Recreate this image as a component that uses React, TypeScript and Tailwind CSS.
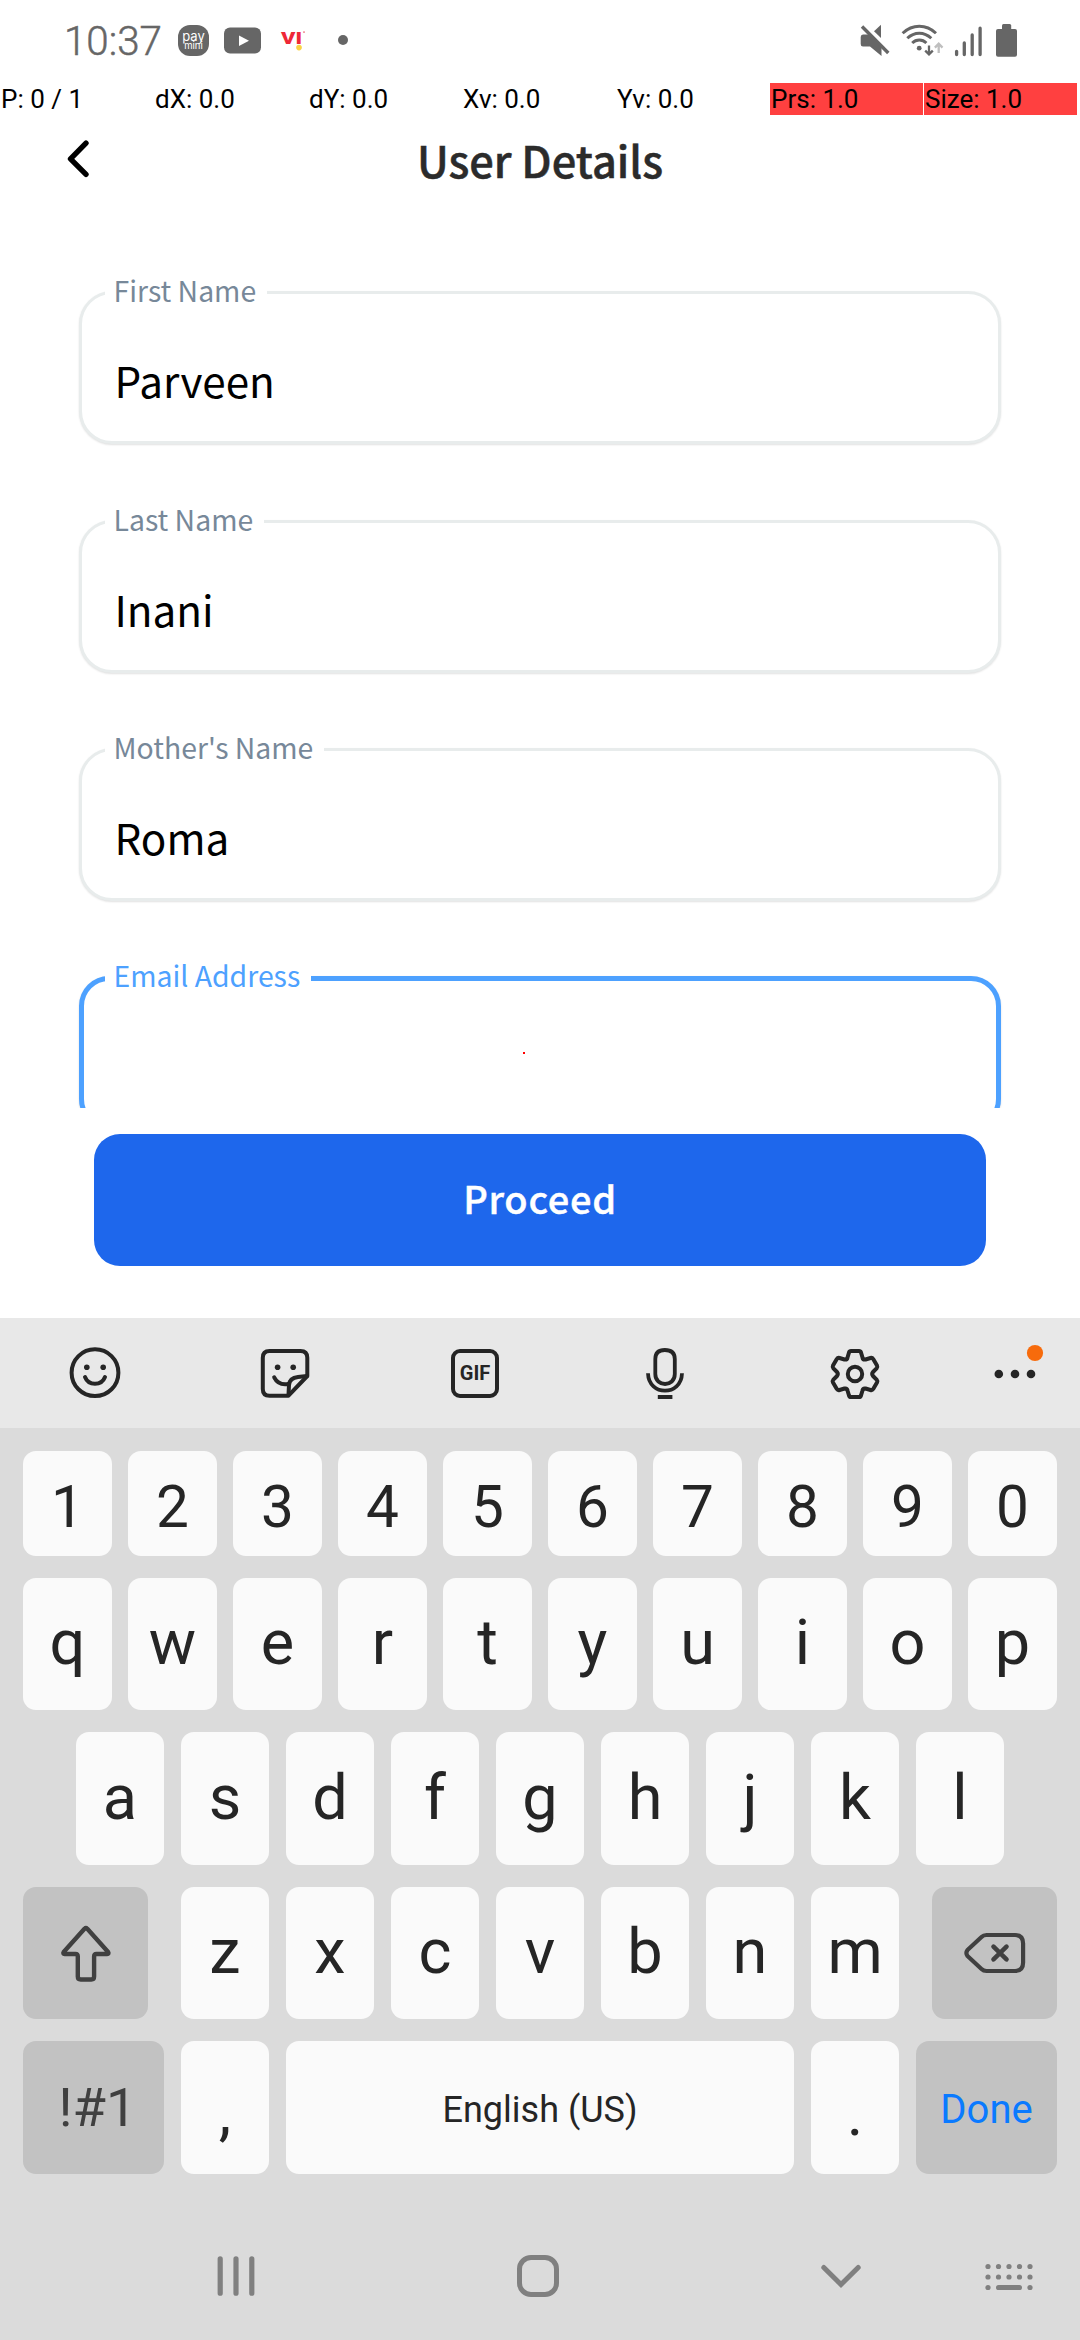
import type { ReactNode } from 'react';

const cjk = 'font-["Noto_Sans_CJK_JP",sans-serif]';

function StatusBar() {
  return (
    <div className="flex h-[83px] shrink-0 items-start justify-between pt-5 pr-[62px] pl-[64px] text-[#666666]">
      <div className="flex">
        <span className="w-[114px] text-[40.3px] leading-[44px] font-light [-webkit-text-stroke:0.5px_#666666]">10:37</span>
        <div className="mt-[5px] flex h-[31px] w-[31px] flex-col items-center rounded-[12px] bg-[#666666] font-[Inter,sans-serif] text-white">
          <span className="mt-[5px] text-[13px] leading-[12px]">pay</span>
          <span className="text-[9.5px] leading-[8px]">mini</span>
        </div>
        <svg className="ml-[15px]" width="38" height="40" viewBox="224 20 38 40">
          <rect x="224" y="27.5" width="37" height="26" rx="6" fill="currentColor" />
          <path d="M239 35.5 L249 40.7 L239 46 Z" fill="#fff" />
        </svg>
        <svg className="ml-[18px]" width="28" height="40" viewBox="280 20 28 40">
          <text x="281" y="43.5" textLength="21" lengthAdjust="spacingAndGlyphs" fontFamily="Roboto" fontWeight="900" fontSize="17" fill="#ee2737">VI</text>
          <circle cx="299" cy="47.6" r="2.8" fill="#fbd244" />
          <rect x="303" y="31.4" width="2" height="1.4" fill="#f08a92" />
        </svg>
        <div className="mt-[15px] ml-[30px] h-[10px] w-[10px] rounded-full bg-[#666666]" />
      </div>
      <div className="flex">
        <svg width="30" height="40" viewBox="860 20 30 40" fill="currentColor">
          <path d="M881 24.8 V38 L874 31.2 Z" />
          <path d="M863 34.5 H869 L881.5 47 V56 L870 46.5 H863 Q860.7 46.5 860.7 44 V37 Q860.7 34.5 863 34.5 Z" />
          <path d="M862 26.5 L888.3 53" stroke="currentColor" strokeWidth="3.4" />
        </svg>
        <svg className="ml-[11px]" width="43" height="40" viewBox="901 20 43 40" fill="none" stroke="currentColor" strokeWidth="2.9">
          <path d="M902.6 33.2 Q910 26.2 919.3 26.2 Q928.6 26.2 936 33.2" />
          <path d="M907.3 38.3 Q912.5 33.2 919.3 33.2 Q926 33.2 931.3 38.3" />
          <path d="M912.2 43 Q915.2 40 919.3 40 Q923.4 40 926.4 43" />
          <circle cx="919.2" cy="48.2" r="2.4" fill="currentColor" stroke="none" />
          <path d="M929 45.5 V54 M925.2 50.6 L929 54.4 L932.8 50.6" strokeWidth="2.3" />
          <path d="M938.7 53 V44 M934.9 47.6 L938.7 43.6 L942.5 47.6" stroke="#bfbfbf" strokeWidth="2.3" />
        </svg>
        <svg className="ml-[10px]" width="29" height="40" viewBox="954 20 29 40" stroke="currentColor" strokeWidth="3.3" strokeLinecap="round">
          <path d="M956.6 51.3 V54.6 M964.3 43 V54.6 M972.2 35 V54.6 M980.1 28.2 V54.6" />
        </svg>
        <svg className="ml-3" width="23" height="40" viewBox="995 20 23 40" fill="currentColor">
          <rect x="1002" y="24" width="9.2" height="8" rx="1.5" />
          <rect x="996" y="29" width="21" height="27.8" rx="2" />
        </svg>
      </div>
    </div>
  );
}

const readings = ['P: 0 / 1', 'dX: 0.0', 'dY: 0.0', 'Xv: 0.0', 'Yv: 0.0'];

function PointerBar() {
  return (
    <div className="flex h-8 shrink-0 gap-px text-[26px] leading-8 whitespace-pre text-black">
      {readings.map((r) => (
        <div key={r} className="w-[153px] pl-px">{r}</div>
      ))}
      <div className="w-[153px] bg-[#ff4040] pl-px">Prs: 1.0</div>
      <div className="w-[153px] bg-[#ff4040] pl-px">Size: 1.0</div>
    </div>
  );
}

function Field({ label, value, className }: { label: string; value: string; className: string }) {
  return (
    <div className={`relative h-[153px] shrink-0 ${className}`}>
      <div className="flex h-full items-center rounded-[33px] border-[3px] border-[#e8ecec] bg-white pt-[25px] pl-[32.5px] text-[42.2px] text-black shadow-[0_1px_2px_rgba(0,0,0,0.12)]">
        {value}
      </div>
      <span className="absolute top-[-17px] left-[26px] h-8 bg-white pr-[11px] pl-[8.5px] text-[28.4px] leading-8 whitespace-nowrap text-[#778899]">
        {label}
      </span>
    </div>
  );
}

function Form() {
  return (
    <div className={`flex h-[905px] shrink-0 flex-col overflow-hidden px-[79px] pt-[88px] ${cjk}`}>
      <Field label="First Name" value="Parveen" className="mb-[76px]" />
      <Field label="Last Name" value="Inani" className="mb-[75px]" />
      <Field label="Mother's Name" value="Roma" className="mb-[75px]" />
      <div className="relative h-[153px] shrink-0">
        <div className="h-full rounded-[30px] border-[5px] border-[#4da1ff] bg-white shadow-[0_1px_2px_rgba(0,0,0,0.15)]" />
        <span className="absolute top-[-17px] left-[26px] h-8 bg-white pr-[11px] pl-[8.5px] text-[28.4px] leading-8 whitespace-nowrap text-[#4da1ff]">
          Email Address
        </span>
        <div className="absolute top-[76px] left-[444px] h-[2px] w-[2px] bg-[#ff0000]" />
      </div>
    </div>
  );
}

function Toolbar() {
  return (
    <div className="flex h-[110px] shrink-0 items-center bg-[#e8e8e8] text-[#252525]">
      <div className="flex w-[190px] justify-center">
        <svg width="60" height="60" viewBox="65 1343 60 60" fill="none" stroke="currentColor" strokeWidth="4">
          <circle cx="95" cy="1372.7" r="23.4" />
          <circle cx="86.8" cy="1367.3" r="2.8" fill="currentColor" stroke="none" />
          <circle cx="103.2" cy="1367.3" r="2.8" fill="currentColor" stroke="none" />
          <path d="M85 1377 C88.5 1386 101.5 1386 105 1377" strokeLinecap="round" />
        </svg>
      </div>
      <div className="flex w-[190px] justify-center">
        <svg width="60" height="60" viewBox="255 1343 60 60" fill="none" stroke="currentColor" strokeWidth="4" strokeLinejoin="round" strokeLinecap="round">
          <path d="M288.5 1395.7 H269.5 Q262.8 1395.7 262.8 1389 V1357.7 Q262.8 1351 269.5 1351 H300.5 Q307.3 1351 307.3 1357.7 V1376 Z" />
          <path d="M307 1376 L298 1377 Q289.5 1378 289 1385 L288.5 1395" />
          <path d="M274.2 1377.3 C277 1383 281.5 1385 288 1384" />
          <circle cx="277.6" cy="1367.3" r="2.8" fill="currentColor" stroke="none" />
          <circle cx="293.2" cy="1367.3" r="2.8" fill="currentColor" stroke="none" />
        </svg>
      </div>
      <div className="flex w-[190px] justify-center">
        <div className="flex h-[49px] w-[48px] items-center justify-center rounded-[9px] border-4 border-[#252525] text-[20px] leading-none font-bold">
          GIF
        </div>
      </div>
      <div className="flex w-[190px] justify-center">
        <svg width="60" height="60" viewBox="635 1343 60 60" fill="none" stroke="currentColor" strokeWidth="3.8">
          <path d="M655.3 1359 Q655.3 1350 664.8 1350 Q674.8 1350 674.8 1359 V1374 C674.8 1387.3 655.3 1387.3 655.3 1374 Z" />
          <path d="M648 1373.3 C648.6 1396.5 681.4 1396.5 682 1373.3" />
          <path d="M657.8 1397 H672.4" strokeWidth="4" />
        </svg>
      </div>
      <div className="flex w-[190px] justify-center">
        <svg width="60" height="60" viewBox="825 1343 60 60" fill="none" stroke="currentColor" strokeWidth="4" strokeLinejoin="round">
          <g transform="translate(855 1374)">
            <path d="M-4 -23 H4 Q5.5 -23 6 -21.5 L7.5 -16.5 Q8 -14 10.5 -14.5 L15.5 -16 Q17.2 -16.5 18.2 -15 L22 -8.5 Q22.8 -7 21.6 -5.6 L18 -2 Q16.4 0 18 2 L21.6 5.6 Q22.8 7 22 8.5 L18.2 15 Q17.2 16.5 15.5 16 L10.5 14.5 Q8 14 7.5 16.5 L6 21.5 Q5.5 23 4 23 H-4 Q-5.5 23 -6 21.5 L-7.5 16.5 Q-8 14 -10.5 14.5 L-15.5 16 Q-17.2 16.5 -18.2 15 L-22 8.5 Q-22.8 7 -21.6 5.6 L-18 2 Q-16.4 0 -18 -2 L-21.6 -5.6 Q-22.8 -7 -22 -8.5 L-18.2 -15 Q-17.2 -16.5 -15.5 -16 L-10.5 -14.5 Q-8 -14 -7.5 -16.5 L-6 -21.5 Q-5.5 -23 -4 -23 Z" />
            <circle r="7.2" />
          </g>
        </svg>
      </div>
      <div className="flex w-[130px] justify-center">
        <svg width="60" height="60" viewBox="985 1343 60 60" fill="currentColor">
          <circle cx="998.8" cy="1374" r="4.3" />
          <circle cx="1015" cy="1374" r="4.3" />
          <circle cx="1031" cy="1374" r="4.3" />
          <circle cx="1035" cy="1353" r="8.1" fill="#f76b0c" />
        </svg>
      </div>
    </div>
  );
}

function Key({ className, children }: { className: string; children: ReactNode }) {
  return <div className={`flex items-center justify-center rounded-[13px] ${className}`}>{children}</div>;
}

const letterKey = 'w-[88px] bg-[#fafafa] text-[63px] leading-none pb-[3px]';

function Keyboard() {
  return (
    <div className="flex h-[746px] shrink-0 flex-col gap-[22px] bg-[#dbdbdb] px-[23px] pt-[23px] text-[#252525]">
      <div className="flex h-[105px] gap-4">
        {'1234567890'.split('').map((k) => (
          <Key key={k} className="w-[89px] bg-[#fafafa] pt-[7px] text-[58.5px] leading-none">{k}</Key>
        ))}
      </div>
      <div className="flex h-[132px] gap-4">
        {'qwertyuiop'.split('').map((k) => (
          <Key key={k} className="w-[89px] bg-[#fafafa] pb-[3px] text-[63px] leading-none">{k}</Key>
        ))}
      </div>
      <div className="flex h-[133px] gap-[17px] pl-[53px]">
        {'asdfghjkl'.split('').map((k) => (
          <Key key={k} className={letterKey}>{k}</Key>
        ))}
      </div>
      <div className="flex h-[132px] justify-between">
        <Key className="w-[125px] bg-[#c2c2c2] text-[#404040]">
          <svg width="60" height="64" viewBox="55.5 1921 60 64" fill="none" stroke="currentColor" strokeWidth="4.4" strokeLinejoin="round">
            <path d="M84 1928.8 Q85.4 1927.5 86.8 1928.8 L107.6 1952 Q108.8 1953.8 106.5 1954 H96 Q93.6 1954 93.6 1956.5 V1976.5 Q93.6 1979.5 90.8 1979.5 H80.2 Q77.3 1979.5 77.3 1976.5 V1956.5 Q77.3 1954 75 1954 H64.3 Q62 1953.8 63.2 1952 Z" />
          </svg>
        </Key>
        <div className="flex gap-[17px]">
          {'zxcvbnm'.split('').map((k) => (
            <Key key={k} className={letterKey}>{k}</Key>
          ))}
        </div>
        <Key className="w-[125px] bg-[#c2c2c2] text-[#404040]">
          <svg width="70" height="50" viewBox="959.5 1928 70 50" fill="none" stroke="currentColor" strokeWidth="4.2" strokeLinejoin="round" strokeLinecap="round">
            <path d="M986 1935 H1014.5 Q1022.6 1935 1022.6 1943.5 V1962.5 Q1022.6 1971 1014.5 1971 H986 Q983 1971 981 1969 L967 1956 Q964.8 1953 967 1950 L981 1937 Q983 1935 986 1935 Z" />
            <path d="M993 1946.7 L1006 1959.3 M1006 1946.7 L993 1959.3" strokeWidth="4.6" />
          </svg>
        </Key>
      </div>
      <div className="flex h-[133px] gap-[17px]">
        <Key className="w-[141px] bg-[#c2c2c2] pt-[2px] pl-[8px] text-[54.4px] leading-none text-[#404040]">!#1</Key>
        <Key className="w-[88px] bg-[#fafafa] pt-[10px] text-[63px] leading-none">,</Key>
        <Key className="w-[508px] bg-[#fafafa] pt-1 text-[36px] leading-none">English (US)</Key>
        <Key className="w-[88px] bg-[#fafafa] pt-[11px] text-[63px] leading-none">.</Key>
        <Key className="w-[141px] bg-[#c2c2c2] pt-1 text-[40px] leading-none text-[#0a7aff]">Done</Key>
      </div>
    </div>
  );
}

function NavBar() {
  return (
    <div className="flex h-[166px] shrink-0 items-center bg-[#dbdbdb] pt-[38px] pl-[85px] text-[#808080]">
      <div className="flex w-[302px] justify-center">
        <svg width="50" height="50" viewBox="211 2251 50 50" stroke="currentColor" strokeWidth="5.2" strokeLinecap="round">
          <path d="M220.2 2258.8 V2293.2 M236 2258.8 V2293.2 M251.8 2258.8 V2293.2" />
        </svg>
      </div>
      <div className="flex w-[302px] justify-center">
        <div className="h-[42px] w-[42px] rounded-[14px] border-5 border-[#808080]" />
      </div>
      <div className="flex w-[304px] justify-center">
        <svg width="50" height="50" viewBox="816 2251 50 50" fill="none" stroke="currentColor" strokeWidth="5" strokeLinecap="round">
          <path d="M823.8 2267.5 L841 2284.5 L858.2 2267.5" />
        </svg>
      </div>
      <svg className="-ml-2" width="48" height="50" viewBox="985 2251 48 50" fill="currentColor">
        {[988, 998.5, 1009, 1019.5, 1030].map((x) => (
          <g key={x}>
            <circle cx={x} cy="2266.5" r="2.6" />
            <circle cx={x} cy="2277" r="2.6" />
          </g>
        ))}
        <circle cx="988" cy="2287.5" r="2.6" />
        <rect x="996" y="2284.9" width="26" height="5.2" rx="2.6" />
        <circle cx="1030" cy="2287.5" r="2.6" />
      </svg>
    </div>
  );
}

export default function App() {
  return (
    <div className="flex h-[2340px] w-[1080px] flex-col overflow-hidden bg-white font-[Roboto,sans-serif]">
      <StatusBar />
      <PointerBar />
      <header className="relative flex h-[88px] shrink-0 items-center justify-center">
        <svg className="absolute left-[64px]" width="30" height="44" viewBox="64 137 30 44" fill="none" stroke="#000" strokeWidth="5.4" strokeLinecap="round" strokeLinejoin="round">
          <path d="M86 143.2 L70.5 158.8 L86 174.3" />
        </svg>
        <h1 className={`pt-[2px] text-[43.4px] leading-none font-medium text-[#2b2b2b] [-webkit-text-stroke:0.5px_#2b2b2b] ${cjk}`}>User Details</h1>
      </header>
      <Form />
      <div className="h-[210px] shrink-0 px-[94px] pt-[26px]">
        <button className={`flex h-[132px] w-full items-center justify-center rounded-[26px] bg-[#1e67ec] pb-[5px] text-[38px] leading-none font-medium tracking-[0.7px] text-white [-webkit-text-stroke:0.4px_white] ${cjk}`}>
          Proceed
        </button>
      </div>
      <Toolbar />
      <Keyboard />
      <NavBar />
    </div>
  );
}
